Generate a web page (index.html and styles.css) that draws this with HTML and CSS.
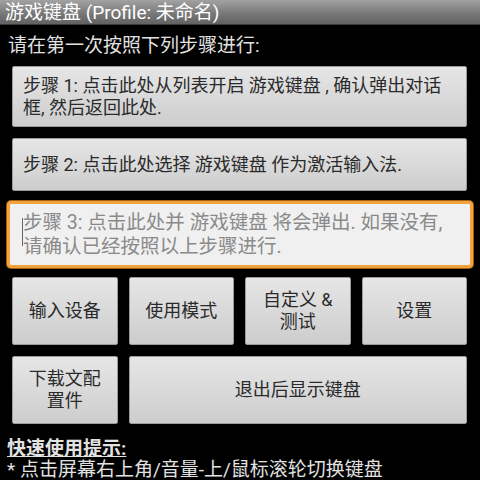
FILE: index.html
```html
<!DOCTYPE html>
<html lang="zh-CN">
  <head>
    <meta charset="UTF-8" />
    <meta name="viewport" content="width=device-width, initial-scale=1.0" />
    <title>游戏键盘</title>
    <link rel="stylesheet" href="styles.css">
  </head>
  <body>
    <div class="title-bar">游戏键盘 (Profile: 未命名)</div>

    <div class="content">
      <div class="intro">请在第一次按照下列步骤进行:</div>

      <div class="step step-1">步骤 1: 点击此处从列表开启 游戏键盘 , 确认弹出对话框, 然后返回此处.</div>
      <div class="step step-2">步骤 2: 点击此处选择 游戏键盘 作为激活输入法.</div>
      <div class="step step-3 focused"><span class="caret"></span>步骤 3: 点击此处并 游戏键盘 将会弹出. 如果没有, 请确认已经按照以上步骤进行.</div>

      <div class="grid">
        <div class="btn">输入设备</div>
        <div class="btn">使用模式</div>
        <div class="btn">自定义 &amp; 测试</div>
        <div class="btn">设置</div>
        <div class="btn">下载文配置件</div>
        <div class="btn wide">退出后显示键盘</div>
      </div>

      <div class="tips">
        <div class="tips-title">快速使用提示:</div>
        <div class="tips-line">* 点击屏幕右上角/音量-上/鼠标滚轮切换键盘</div>
      </div>
    </div>
  </body>
</html>
```

FILE: styles.css
```css
body {
  margin: 0;
  padding: 0;
  background-color: #000;
  font-family: Roboto, "Noto Sans CJK SC", sans-serif;
  font-size: 18px;
  width: 480px;
  height: 480px;
  overflow: hidden;
}
.title-bar {
  height: 25px;
  line-height: 25px;
  padding-left: 5px;
  color: #fff;
  background: linear-gradient(#a2a2a2, #767676 60%, #626262);
  border-bottom: 1px solid #3a3a3a;
  box-sizing: border-box;
  font-size: 19px;
  white-space: nowrap;
}
.content {
  padding: 0 13px 0 12px;
}
.intro {
  color: #e2e2e2;
  font-size: 19px;
  height: 40px;
  line-height: 22px;
  padding-top: 10px;
  box-sizing: border-box;
  margin-left: -4px;
}
.step {
  display: flex;
  align-items: center;
  background: linear-gradient(#e6e6e6, #cdcdcd);
  border: 1px solid #9c9c9c;
  border-radius: 2px;
  color: #2a2a2a;
  line-height: 22px;
  padding: 0 10px;
  box-sizing: border-box;
}
.step-1 {
  height: 61px;
  margin-top: 1px;
}
.step-2 {
  height: 53px;
  margin-top: 11px;
}
.step-3 {
  height: 67px;
  margin: 10px -6px 0 -5px;
  padding: 0 10px 0 13px;
  position: relative;
}
.focused {
  background: #f0f0f0;
  border: 3px solid #f2a23a;
  border-radius: 4px;
  box-shadow: 0 0 0 1px #a65e10;
  color: #8a8a8a;
  font-size: 19.5px;
  line-height: 24px;
}
.caret {
  position: absolute;
  left: 12px;
  top: 14px;
  width: 1px;
  height: 28px;
  background: #666;
}
.grid {
  display: grid;
  grid-template-columns: repeat(4, 1fr);
  grid-auto-rows: 68px;
  gap: 11px;
  margin-top: 9px;
}
.btn {
  display: flex;
  align-items: center;
  justify-content: center;
  text-align: center;
  background: linear-gradient(#e6e6e6, #cdcdcd);
  border: 1px solid #9c9c9c;
  border-radius: 2px;
  color: #2a2a2a;
  line-height: 22px;
  padding: 0 9px;
  box-sizing: border-box;
}
.wide {
  grid-column: span 3;
}
.tips {
  margin-left: -5px;
  margin-top: 14px;
  color: #e2e2e2;
  font-size: 19px;
  line-height: 21px;
}
.tips-title {
  font-weight: bold;
  text-decoration: underline;
}
```
